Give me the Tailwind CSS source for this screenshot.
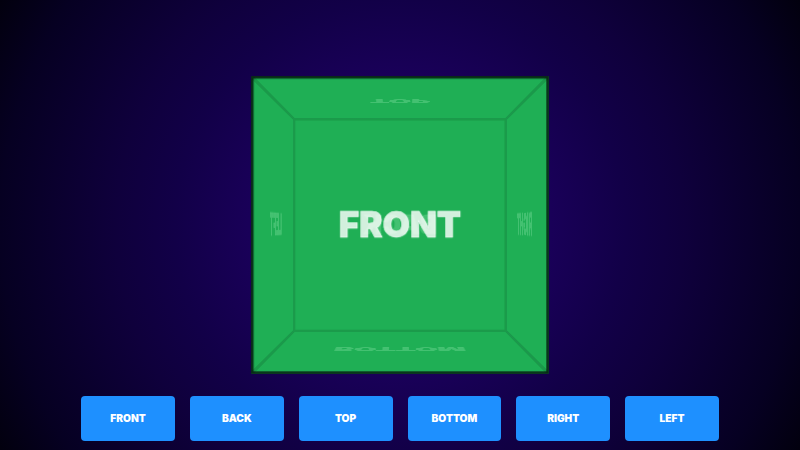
<!DOCTYPE html>
<html lang="en">
<head>
  <meta charset="UTF-8" />
  <title>CSS Cube</title>
  <script src="https://cdn.jsdelivr.net/npm/@tailwindcss/browser@4"></script>
</head>
<body class="w-[800px] h-[450px] overflow-hidden bg-[radial-gradient(circle_at_center,#1c0066_0%,#190058_33%,#120048_49%,#0f003c_62%,#060022_87%,#02000e_100%)] font-['Inter','Liberation_Sans',sans-serif]">
  <div class="h-[396px] flex items-center justify-center pt-[54px]">
    <!-- cube -->
    <div class="relative w-[248px] h-[248px] perspective-[745px]">
      <div class="relative w-full h-full transform-3d">
        <div class="absolute inset-0 flex items-center justify-center bg-[#1fb655]/80 border-2 border-black/70 text-white/80 text-[29.3px] font-black [-webkit-text-stroke:0.4px_white] [transform:rotateY(180deg)_translateZ(124px)]">BACK</div>
        <div class="absolute inset-0 flex items-center justify-center bg-[#1fb655]/80 border-2 border-black/70 text-white/80 text-[29.3px] font-black [-webkit-text-stroke:0.4px_white] [transform:rotateX(90deg)_translateZ(124px)]">TOP</div>
        <div class="absolute inset-0 flex items-center justify-center bg-[#1fb655]/80 border-2 border-black/70 text-white/80 text-[29.3px] font-black [-webkit-text-stroke:0.4px_white] [transform:rotateX(-90deg)_translateZ(124px)]">BOTTOM</div>
        <div class="absolute inset-0 flex items-center justify-center bg-[#1fb655]/80 border-2 border-black/70 text-white/80 text-[29.3px] font-black [-webkit-text-stroke:0.4px_white] [transform:rotateY(90deg)_translateZ(124px)]">RIGHT</div>
        <div class="absolute inset-0 flex items-center justify-center bg-[#1fb655]/80 border-2 border-black/70 text-white/80 text-[29.3px] font-black [-webkit-text-stroke:0.4px_white] [transform:rotateY(-90deg)_translateZ(124px)]">LEFT</div>
        <div class="absolute inset-0 flex items-center justify-center bg-[#1fb655]/80 border-2 border-black/70 text-white/80 text-[29.3px] font-black [-webkit-text-stroke:0.4px_white] [transform:translateZ(124px)]">FRONT</div>
      </div>
    </div>
  </div>
  <!-- buttons -->
  <div class="flex justify-center gap-[15px]">
    <button class="w-[93.8px] h-[45px] rounded bg-[#1e90ff] text-white text-[10.2px] font-black">FRONT</button>
    <button class="w-[93.8px] h-[45px] rounded bg-[#1e90ff] text-white text-[10.2px] font-black">BACK</button>
    <button class="w-[93.8px] h-[45px] rounded bg-[#1e90ff] text-white text-[10.2px] font-black">TOP</button>
    <button class="w-[93.8px] h-[45px] rounded bg-[#1e90ff] text-white text-[10.2px] font-black">BOTTOM</button>
    <button class="w-[93.8px] h-[45px] rounded bg-[#1e90ff] text-white text-[10.2px] font-black">RIGHT</button>
    <button class="w-[93.8px] h-[45px] rounded bg-[#1e90ff] text-white text-[10.2px] font-black">LEFT</button>
  </div>
</body>
</html>
